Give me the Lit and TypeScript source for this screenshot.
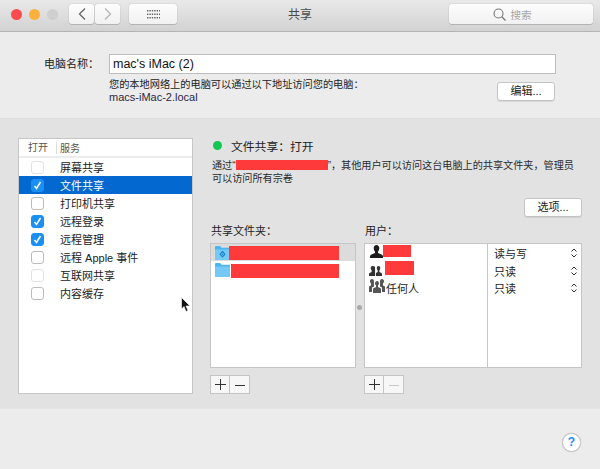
import { LitElement, html, css, svg } from "lit";
import { customElement } from "lit/decorators.js";

const person = () => html`<svg class="ico" style="margin-top:-3px" width="13" height="13" viewBox="0 0 14 14" preserveAspectRatio="none"><path fill="#1c1c1c" d="M7 0C5 0 4 1.600 4 3.600 4 5.200 4.700 6.600 5.400 7.200L5.400 8.600 1 10.600C.4 10.900 0 11.600 0 12.400V14H14V12.400C14 11.600 13.600 10.900 13 10.600L8.600 8.600 8.600 7.200C9.300 6.600 10 5.200 10 3.600 10 1.600 9 0 7 0Z"/></svg>`;
const group = () => html`<svg class="ico" style="margin-left:-1px" width="13" height="10" viewBox="0 0 15 11" preserveAspectRatio="none"><g fill="#333"><path d="M4 0C2.800 0 2 1 2 2.400 2 3.500 2.500 4.300 3 4.700V6.600L.6 7.800C.2 8 0 8.400 0 8.900V11H7V1C6.400 .4 5.200 0 4 0Z"/><path d="M11 0C9.800 0 9 1 9 2.400 9 3.500 9.500 4.300 10 4.700V6.600L8 7.800V11H15V8.900C15 8.400 14.800 8 14.400 7.800L12 6.600V4.700C12.500 4.300 13 3.500 13 2.400 13 1 12.200 0 11 0Z"/></g></svg>`;
const crowd = () => html`<svg class="ico" style="margin:-3px 0 0 -1px" width="16" height="14" viewBox="0 0 16 14"><g fill="#555"><path d="M3 0C1.800 0 1 1 1 2.200 1 3.200 1.400 4 2 4.400V6.400L0 7.600V13H3V8.600L5 7.400V5.200C4.800 4.600 5 3.800 5 2 4.800 .8 4 0 3 0Z"/><path d="M13 0C14.200 0 15 1 15 2.200 15 3.200 14.600 4 14 4.400V6.400L16 7.600V13H13V8.600L11 7.400V5.200C11.200 4.600 11 3.800 11 2 11.200 .8 12 0 13 0Z"/><path d="M8 2C6.800 2 6 3 6 4.300 6 5.300 6.400 6.100 7 6.500V8L4 9.500V14H12V9.500L9 8V6.500C9.600 6.100 10 5.300 10 4.300 10 3 9.200 2 8 2Z"/></g></svg>`;
const folder = (share: boolean) => html`<svg class="ico" width="15" height="14" viewBox="0 0 16 14" preserveAspectRatio="none"><path fill="#4db4ef" d="M1.200 0H5.500L7 1.800H14.800C15.500 1.800 16 2.300 16 3V12.800C16 13.500 15.500 14 14.800 14H1.200C.5 14 0 13.500 0 12.800V1.200C0 .5 .5 0 1.200 0Z"/><path fill="#76c9f5" d="M0 3.500H16V12.800C16 13.500 15.500 14 14.800 14H1.200C.5 14 0 13.500 0 12.800Z"/>${share ? svg`<path fill="none" stroke="#1783c9" stroke-width="1.200" d="M8 5.500 10.500 8.200 8 10.900 5.500 8.200Z"/><circle cx="8" cy="8.200" r=".8" fill="#1783c9"/>` : ""}</svg>`;
const stepper = () => html`<svg class="stepper" width="6" height="10" viewBox="0 0 6 10"><path fill="none" stroke="#333" d="M.5 3.500 3 1 5.500 3.500M.5 6.500 3 9 5.500 6.500"/></svg>`;

const services: { name: string; checked: boolean; faint?: boolean; selected?: boolean }[] = [
  { name: "屏幕共享", checked: false, faint: true },
  { name: "文件共享", checked: true, selected: true },
  { name: "打印机共享", checked: false },
  { name: "远程登录", checked: true },
  { name: "远程管理", checked: true },
  { name: "远程 Apple 事件", checked: false },
  { name: "互联网共享", checked: false, faint: true },
  { name: "内容缓存", checked: false },
];

@customElement("app-root")
export class AppRoot extends LitElement {
  static styles = css`
    :host {
      display: block;
      position: relative;
      width: 600px;
      height: 469px;
      overflow: hidden;
      background: #ececec;
      color: #222;
      font: 11px "Liberation Sans", "Noto Sans CJK SC", sans-serif;
    }
    .ico { display: block; flex: none; }
    .titlebar {
      box-sizing: border-box;
      height: 32px;
      padding: 4px 7px 0 10px;
      display: grid;
      grid-template-columns: 1fr auto 1fr;
      align-items: start;
      background: linear-gradient(#e9e9e9, #d2d2d2);
      border-bottom: 1px solid #b4b4b4;
    }
    .left { display: flex; align-items: center; }
    .lights { display: flex; gap: 7px; margin: 0 11px 0 1px; }
    .light { width: 11px; height: 11px; border-radius: 50%; }
    .tb-btn {
      box-sizing: border-box;
      height: 20px;
      background: linear-gradient(#fdfdfd, #f1f1f1);
      border-radius: 3px;
      box-shadow: 0 0 1px rgba(0, 0, 0, 0.45), 0 1px 0 rgba(0, 0, 0, 0.12);
      display: flex;
      align-items: center;
      justify-content: center;
    }
    .nav { width: 25px; }
    .grid-btn { width: 48px; margin-left: 9px; }
    .title { font-size: 12px; color: #4a4a4a; line-height: 22px; padding-right: 3px; }
    .search { width: 144px; justify-self: end; gap: 5px; color: #a5a5a5; font-size: 10.500px; padding-right: 18px; }
    .name-section {
      box-sizing: border-box;
      height: 87px;
      padding: 22px 44px 0 0;
      display: grid;
      grid-template-columns: 109px 1fr;
      grid-template-rows: 20px auto;
      row-gap: 4px;
      border-bottom: 1px solid #dedede;
    }
    .name-label { text-align: right; padding-right: 10px; line-height: 21px; font-size: 11px; }
    .input {
      box-sizing: border-box;
      height: 20px;
      background: #fff;
      border: 1px solid #bdbdbd;
      padding-left: 3px;
      line-height: 18px;
      font-size: 12.500px;
      color: #111;
    }
    .hint-row { grid-column: 2; display: flex; justify-content: space-between; align-items: flex-start; }
    .hint { font-size: 10.200px; line-height: 13px; }
    .hint .host { font-size: 11px; color: #2a2a44; }
    .btn {
      box-sizing: border-box;
      width: 58px;
      height: 19px;
      background: #fff;
      border: 1px solid #c4c4c4;
      border-radius: 3px;
      box-shadow: 0 1px 0 rgba(0, 0, 0, 0.08);
      text-align: center;
      line-height: 17px;
      font-size: 11px;
    }
    .edit { margin: 4px 1px 0 0; }
    .panel {
      box-sizing: border-box;
      height: 290px;
      padding: 19px 18px 0 18px;
      display: flex;
      background: #e2e2e2;
      border-bottom: 1px solid #e6e6e6;
    }
    .services {
      box-sizing: border-box;
      width: 175px;
      height: 256px;
      background: #fff;
      border: 1px solid #c6c6c6;
    }
    .head {
      height: 17px;
      display: flex;
      align-items: center;
      border-bottom: 2px solid #ececec;
      font-size: 10px;
      color: #555;
    }
    .h-open { width: 38px; padding-left: 9px; box-sizing: border-box; border-right: 1px solid #ddd; line-height: 12px; }
    .h-svc { padding-left: 3px; }
    .row { height: 18px; display: flex; align-items: center; }
    .row.selected { background: #0368d0; color: #fff; }
    .row .label { margin-left: 16px; }
    .check {
      box-sizing: border-box;
      width: 13px;
      height: 13px;
      margin-left: 12px;
      border-radius: 3px;
      background: #fff;
      border: 1px solid #bcbcbc;
      display: flex;
      align-items: center;
      justify-content: center;
    }
    .check.faint { border-color: #e2e2e2; }
    .check.on { background: #1a90f5; border-color: #1a90f5; }
    .right { width: 372px; margin-left: 17px; display: flex; flex-direction: column; }
    .status { display: flex; align-items: center; height: 14px; margin-left: 3px; font-size: 11.800px; }
    .dot { width: 9px; height: 9px; border-radius: 50%; background: #14c653; margin-right: 9px; }
    .desc { margin: 7px 0 0 2px; font-size: 10.150px; line-height: 13px; height: 26px; width: 368px; color: #2a2a2a; }
    .red { display: inline-block; background: #fe3a3a; }
    .desc .red { width: 92px; height: 10px; vertical-align: -1px; }
    .opt-row { display: flex; justify-content: flex-end; margin-top: 13px; }
    .tables { display: flex; margin-top: 7px; }
    .col-a { width: 146px; }
    .col-b { width: 218px; }
    .cap { height: 19px; line-height: 14px; padding-left: 1px; font-size: 11px; }
    .box {
      box-sizing: border-box;
      height: 125px;
      background: #fff;
      border: 1px solid #c6c6c6;
    }
    .f-row { height: 18px; display: flex; align-items: center; padding-left: 4px; }
    .f-row.sel { background: #dcdcdc; height: 17px; }
    .f-row .red { height: 14px; }
    .users { display: flex; }
    .u-names { width: 123px; border-right: 1px solid #c6c6c6; box-sizing: border-box; }
    .u-perm { flex: 1; }
    .u-row { height: 17px; display: flex; align-items: center; padding-left: 5px; }
    .u-row:first-child { height: 18px; }
    .u-row .red { flex: none; }
    .p-row { height: 17px; display: flex; align-items: center; justify-content: space-between; padding: 0 4px 0 6px; }
    .p-row:first-child { height: 18px; }
    .pm { display: flex; margin-top: 7px; }
    .pm-btn {
      box-sizing: border-box;
      width: 20px;
      height: 19px;
      background: #f7f7f7;
      border: 1px solid #c4c4c4;
      display: flex;
      align-items: center;
      justify-content: center;
    }
    .pm-btn + .pm-btn { border-left: 0; }
    .split { width: 8px; position: relative; }
    .split i { position: absolute; left: 1px; top: 81px; width: 5px; height: 5px; border-radius: 50%; background: #a9a9a9; }
    .footer { display: flex; justify-content: flex-end; padding: 24px 19px 0 0; }
    .help {
      box-sizing: border-box;
      width: 19px;
      height: 19px;
      border-radius: 50%;
      background: #fff;
      border: 1px solid #c8c8c8;
      box-shadow: 0 0 1px rgba(0, 0, 0, 0.25);
      color: #1a8cf0;
      text-align: center;
      line-height: 17px;
      font-size: 12px;
      font-weight: bold;
    }
    .cursor { position: absolute; left: 181px; top: 297px; }
  `;

  private plusMinus(minusDisabled: boolean) {
    const m = minusDisabled ? "#c8c8c8" : "#333";
    return html`<div class="pm">
      <div class="pm-btn"><svg width="11" height="11" viewBox="0 0 11 11"><path stroke="#333" d="M0 5.500H11M5.500 0V11"/></svg></div>
      <div class="pm-btn"><svg width="10" height="10" viewBox="0 0 10 10"><path stroke=${m} d="M0 5.500H10"/></svg></div>
    </div>`;
  }

  render() {
    return html`
      <div class="titlebar">
        <div class="left">
          <div class="lights">
            <div class="light" style="background:#fc4a4f"></div>
            <div class="light" style="background:#fdb13c"></div>
            <div class="light" style="background:#cfcfcf"></div>
          </div>
          <div class="tb-btn nav"><svg width="8" height="12" viewBox="0 0 8 12"><path fill="none" stroke="#666" stroke-width="1.300" d="M7 .5 1.500 6 7 11.500"/></svg></div>
          <div class="tb-btn nav" style="margin-left:1px"><svg width="8" height="12" viewBox="0 0 8 12"><path fill="none" stroke="#b5b5b5" stroke-width="1.300" d="M1 .5 6.500 6 1 11.500"/></svg></div>
          <div class="tb-btn grid-btn"><svg width="13" height="10" viewBox="0 0 13 10"><g fill="#666">${[0, 1, 2].map((r) => [0, 1, 2, 3, 4, 5].map((c) => svg`<rect x=${c * 2.4} y=${r * 3.5 + 1} width="1.400" height="1.500"/>`))}</g></svg></div>
        </div>
        <div class="title">共享</div>
        <div class="tb-btn search">
          <svg width="13" height="13" viewBox="0 0 13 13"><circle cx="5.500" cy="5.500" r="4.500" fill="none" stroke="#777" stroke-width="1.100"/><path stroke="#777" stroke-width="1.300" d="M8.800 8.800 12.500 12.500"/></svg>
          <span>搜索</span>
        </div>
      </div>

      <div class="name-section">
        <div class="name-label">电脑名称：</div>
        <div class="input">mac's iMac (2)</div>
        <div class="hint-row">
          <div class="hint">您的本地网络上的电脑可以通过以下地址访问您的电脑：<br /><span class="host">macs-iMac-2.local</span></div>
          <div class="btn edit">编辑...</div>
        </div>
      </div>

      <div class="panel">
        <div class="services">
          <div class="head"><div class="h-open">打开</div><div class="h-svc">服务</div></div>
          ${services.map(
            (s) => html`<div class="row ${s.selected ? "selected" : ""}">
              <div class="check ${s.checked ? "on" : ""} ${s.faint ? "faint" : ""}">
                ${s.checked ? html`<svg width="9" height="9" viewBox="0 0 9 9"><path fill="none" stroke="#fff" stroke-width="1.500" d="M1.500 5 3.500 7.500 7.500 1"/></svg>` : ""}
              </div>
              <div class="label">${s.name}</div>
            </div>`
          )}
        </div>

        <div class="right">
          <div class="status"><div class="dot"></div>文件共享：打开</div>
          <div class="desc">通过“<span class="red"></span>”，其他用户可以访问这台电脑上的共享文件夹，管理员可以访问所有宗卷</div>
          <div class="opt-row"><div class="btn">选项...</div></div>
          <div class="tables">
            <div class="col-a">
              <div class="cap">共享文件夹：</div>
              <div class="box">
                <div class="f-row sel">${folder(true)}<span class="red" style="width:110px;margin:1px 0 0 -1px"></span></div>
                <div class="f-row">${folder(false)}<span class="red" style="width:108px;margin:1px 0 0 1px"></span></div>
              </div>
              ${this.plusMinus(false)}
            </div>
            <div class="split"><i></i></div>
            <div class="col-b">
              <div class="cap">用户：</div>
              <div class="box users">
                <div class="u-names">
                  <div class="u-row">${person()}<span class="red" style="width:28px;height:12px;margin-top:-4px"></span></div>
                  <div class="u-row">${group()}<span class="red" style="width:29px;height:14px;margin:-5px 0 0 3px"></span></div>
                  <div class="u-row" style="gap:1px">${crowd()}<span>任何人</span></div>
                </div>
                <div class="u-perm">
                  <div class="p-row"><span>读与写</span>${stepper()}</div>
                  <div class="p-row"><span>只读</span>${stepper()}</div>
                  <div class="p-row"><span>只读</span>${stepper()}</div>
                </div>
              </div>
              ${this.plusMinus(true)}
            </div>
          </div>
        </div>
      </div>

      <div class="footer"><div class="help">?</div></div>

      <svg class="cursor" width="10" height="16" viewBox="0 0 10 16"><path fill="#111" stroke="#fff" stroke-width=".6" d="M.5.5V12L3 9.500 5 14.500 7 13.500 5 9H9Z"/></svg>
    `;
  }
}
